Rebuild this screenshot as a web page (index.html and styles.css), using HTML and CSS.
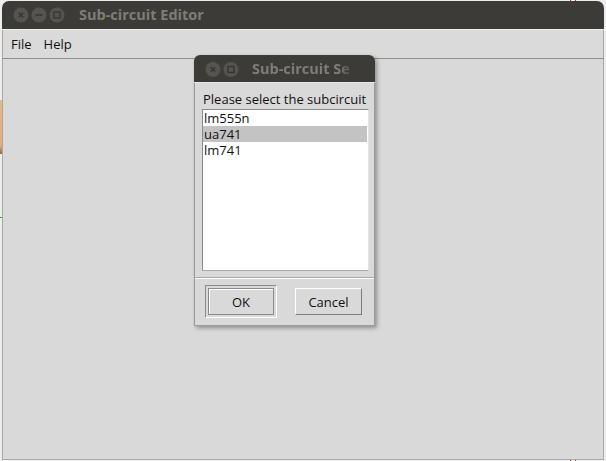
FILE: index.html
```html
<!DOCTYPE html>
<html>
<head>
<meta charset="utf-8">
<title>Sub-circuit Editor</title>
<link rel="stylesheet" href="styles.css">
</head>
<body>
<div class="desk">
  <div class="deco tan"></div>
  <div class="deco green"></div>
  <div class="deco redtop"></div>
  <div class="deco redbot"></div>

  <div class="window">
    <div class="titlebar">
      <svg class="wbtns" width="68" height="28" viewBox="0 0 68 28">
        <circle cx="19" cy="15" r="7.5" fill="#56544e"/>
        <path d="M16.8 12.8 L21.2 17.2 M21.2 12.8 L16.8 17.2" stroke="#34332f" stroke-width="1.4" fill="none"/>
        <circle cx="37" cy="15" r="7.5" fill="#56544e"/>
        <path d="M33.5 15 H40.5" stroke="#34332f" stroke-width="1.4" fill="none"/>
        <circle cx="55" cy="15" r="7.5" fill="#56544e"/>
        <rect x="52" y="12" width="6" height="6" stroke="#34332f" stroke-width="1.3" fill="none"/>
      </svg>
      <span class="title">Sub-circuit Editor</span>
    </div>
    <div class="menubar">
      <span class="menu">File</span>
      <span class="menu">Help</span>
    </div>
    <div class="content"></div>
  </div>

  <div class="dialog">
    <div class="dtitlebar">
      <svg class="wbtns" width="50" height="27" viewBox="0 0 50 27">
        <circle cx="19" cy="14.5" r="7.5" fill="#56544e"/>
        <path d="M16.8 12.3 L21.2 16.7 M21.2 12.3 L16.8 16.7" stroke="#34332f" stroke-width="1.4" fill="none"/>
        <circle cx="37" cy="14.5" r="7.5" fill="#56544e"/>
        <rect x="34" y="11.5" width="6" height="6" stroke="#34332f" stroke-width="1.3" fill="none"/>
      </svg>
      <span class="dtitle">Sub-circuit Se</span>
    </div>
    <div class="dbody">
      <div class="dtop">
        <div class="prompt">Please select the subcircuit</div>
        <div class="listbox">
          <div class="item">lm555n</div>
          <div class="item sel">ua741</div>
          <div class="item">lm741</div>
        </div>
      </div>
      <div class="sep"></div>
      <div class="btnrow">
        <div class="defframe"><button class="btn ok">OK</button></div>
        <button class="btn cancel">Cancel</button>
      </div>
    </div>
  </div>
</div>
</body>
</html>
```

FILE: styles.css
```css
html, body {
  margin: 0;
  padding: 0;
}

body {
  font-family: "Open Sans", "Noto Sans", "DejaVu Sans", sans-serif;
  font-size: 13px;
  color: #111;
}

.desk {
  position: relative;
  width: 606px;
  height: 461px;
  padding: 1px 2px 1px 2px;
  box-sizing: border-box;
  background: #ededed;
  overflow: hidden;
}

.deco {
  position: absolute;
}

.tan {
  left: 0;
  top: 100px;
  width: 2px;
  height: 54px;
  background: linear-gradient(#e4b98c, #dcae80 85%, #8d6a48);
}

.green {
  left: 0;
  top: 217px;
  width: 2px;
  height: 1px;
  background: #22aa22;
}

.redtop {
  left: 570px;
  top: 0;
  width: 4px;
  height: 2px;
  border-left: 1px solid #c0302a;
  border-right: 1px solid #c0302a;
}

.redbot {
  left: 570px;
  top: 459px;
  width: 4px;
  height: 2px;
  border-left: 1px solid #c0302a;
  border-right: 1px solid #c0302a;
}

.window {
  position: relative;
  height: 459px;
  display: flex;
  flex-direction: column;
}

.titlebar {
  flex: none;
  height: 28px;
  box-sizing: border-box;
  padding-bottom: 2px;
  background: #3c3b37;
  border-radius: 7px 7px 0 0;
  display: flex;
  align-items: center;
}

.window .titlebar {
  height: 29px;
  border-bottom: 1px solid #efefef;
}

.wbtns {
  flex: none;
  display: block;
}

.title {
  margin-left: 9px;
  font-weight: 700;
  font-size: 14.5px;
  color: #7f7d77;
  white-space: nowrap;
}

.menubar {
  flex: none;
  height: 29px;
  box-sizing: border-box;
  background: #dadada;
  border-left: 1px solid #a6a6a6;
  border-right: 1px solid #a6a6a6;
  border-bottom: 1px solid #8e8e8e;
  display: flex;
  align-items: center;
  padding-left: 8px;
  padding-bottom: 1px;
}

.menu {
  margin-right: 12px;
  color: #111;
}

.content {
  flex: 1;
  background: #d9d9d9;
  border: 1px solid #a8a8a8;
  border-top: none;
}

.dialog {
  position: absolute;
  left: 194px;
  top: 55px;
  width: 181px;
  box-shadow: 2px 2px 4px rgba(0, 0, 0, 0.35);
  border-radius: 6px 6px 0 0;
}

.dtitlebar {
  height: 27px;
  background: #3c3b37;
  border-radius: 6px 6px 0 0;
  border-bottom: 1px solid #e8e8e8;
  display: flex;
  align-items: center;
  overflow: hidden;
}

.dtitle {
  margin-left: 8px;
  font-weight: 700;
  font-size: 14.5px;
  color: #7f7d77;
  white-space: nowrap;
  overflow: hidden;
  width: 106px;
  -webkit-mask-image: linear-gradient(to right, #000 82%, transparent 100%);
  mask-image: linear-gradient(to right, #000 82%, transparent 100%);
}

.dbody {
  background: #d9d9d9;
  border: 1px solid #9a9a9a;
  border-top: none;
}

.dtop {
  padding: 8px 5px 6px 7px;
}

.prompt {
  line-height: 16px;
  padding-left: 1px;
  margin-bottom: 2px;
  white-space: nowrap;
  color: #111;
}

.listbox {
  width: 167px;
  height: 162px;
  box-sizing: border-box;
  background: #fff;
  border: 1px solid;
  border-color: #8a8a8a #e4e4e4 #a9a9a9 #8a8a8a;
  padding-right: 1px;
}

.item {
  line-height: 16px;
  height: 16px;
  padding-left: 1px;
  color: #111;
}

.item.sel {
  background: #c3c3c3;
}

.sep {
  height: 1px;
  background: #a8a8a8;
  border-bottom: 1px solid #ffffff;
}

.btnrow {
  height: 46px;
  box-sizing: border-box;
  padding-top: 6px;
  display: flex;
  align-items: flex-start;
}

.defframe {
  margin-left: 10px;
  width: 72px;
  height: 33px;
  box-sizing: border-box;
  border: 1px solid;
  border-color: #8a8a8a #ffffff #ffffff #8a8a8a;
  padding: 2px;
}

.btn {
  display: block;
  box-sizing: border-box;
  margin: 0;
  padding: 0;
  height: 27px;
  font-family: "Open Sans", "Noto Sans", "DejaVu Sans", sans-serif;
  font-size: 13px;
  color: #111;
  background: #d9d9d9;
  border: 1px solid;
  border-color: #ffffff #7c7c7c #7c7c7c #ffffff;
}

.btn.ok {
  width: 66px;
  border-color: #8a8a8a;
  box-shadow: inset 1px 1px 0 #ffffff;
}

.btn.cancel {
  margin-left: 18px;
  margin-top: 3px;
  width: 67px;
}
```
